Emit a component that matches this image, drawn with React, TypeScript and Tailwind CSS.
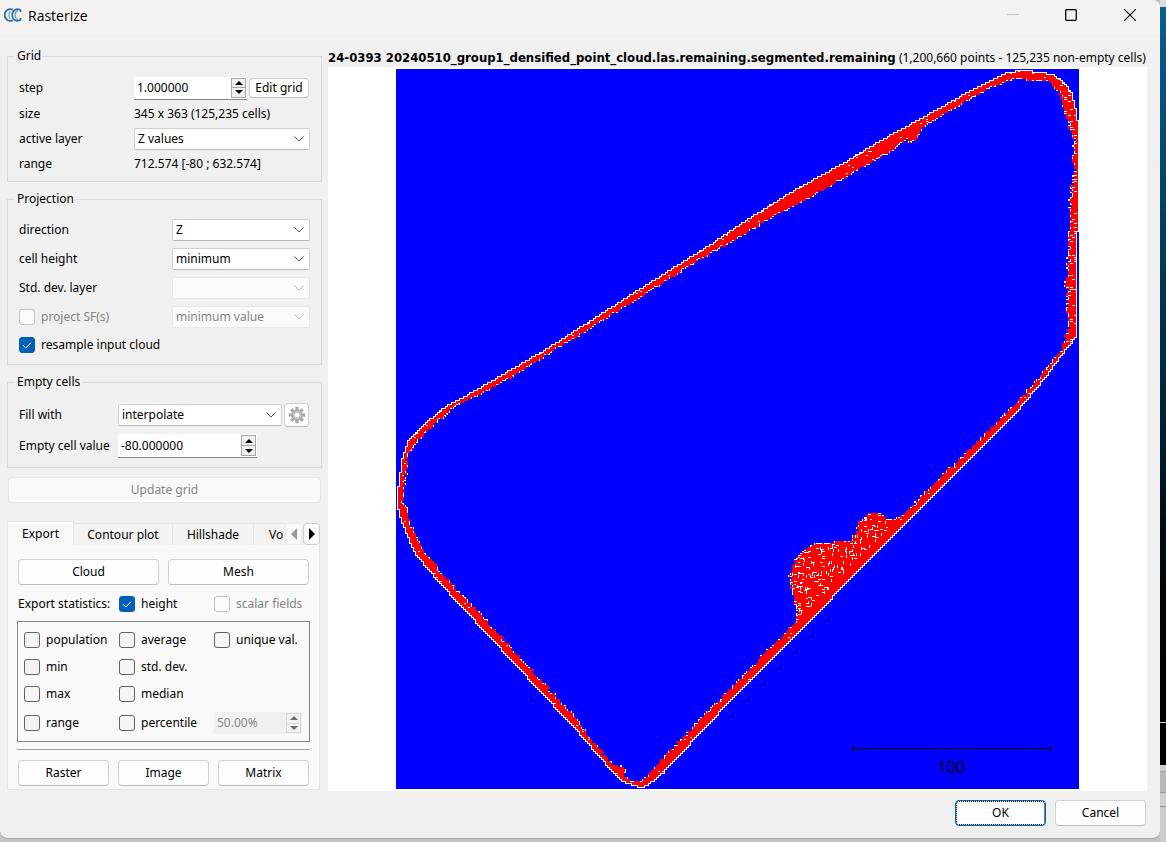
import { useId, useState, type ReactNode } from "react";
import { clsx } from "clsx";

type Point = [number, number];

/* ---------- raster preview ---------- */

const CELL = 2;
const LEFT = 396;
const TOP = 69;
const COLS = 341;
const ROWS = 360;

const OUTER: Point[] = [
  [495, 380], [460, 400], [445, 408], [426, 424], [410, 439], [403, 458], [400, 480], [398, 493],
  [399, 510], [403, 523], [415, 552], [438, 580], [580, 733], [618, 777], [627, 783], [637, 785],
  [640, 787], [647, 785], [663, 772], [718, 713], [790, 640], [810, 620], [877, 550], [940, 489],
  [980, 448], [1015, 413], [1045, 377], [1060, 356], [1076, 336], [1076, 232], [1078, 231],
  [1078, 127], [1075, 110], [1071, 93], [1063, 83], [1053, 75], [1038, 73], [1025, 71], [1007, 73],
  [990, 82], [970, 92], [920, 120], [880, 142], [847, 162], [793, 192], [753, 217], [713, 244],
  [640, 290], [545, 351],
];

const INNER: Point[] = [
  [507, 380], [480, 395], [457, 405], [435, 424], [423, 436], [413, 447], [407, 460], [405, 480],
  [404, 503], [409, 518], [417, 537], [426, 553], [445, 576], [510, 646], [580, 722], [590, 738],
  [610, 761], [619, 769], [622, 766], [626, 769], [624, 775], [632, 781], [640, 782], [650, 772],
  [680, 740], [712, 707], [780, 638], [796, 622], [797, 607], [793, 597], [789, 580], [793, 565],
  [803, 550], [815, 543], [850, 541], [855, 535], [858, 523], [868, 514], [882, 514], [887, 519],
  [898, 518], [913, 505], [933, 484], [975, 444], [1010, 409], [1038, 378], [1055, 357], [1063, 347],
  [1068, 327], [1066, 283], [1068, 260], [1069, 233], [1070, 203], [1074, 170], [1072, 157],
  [1074, 138], [1068, 123], [1062, 100], [1058, 92], [1050, 82], [1030, 82], [1023, 78], [1005, 82],
  [990, 88], [973, 98], [947, 113], [922, 129], [915, 141], [908, 143], [907, 138], [905, 142],
  [893, 150], [853, 173], [807, 199], [773, 217], [740, 237], [690, 266], [640, 298], [560, 347],
];

function noise(a: number, b: number) {
  let h = Math.imul(a + 101, 374761393) ^ Math.imul(b + 57, 668265263);
  h = Math.imul(h ^ (h >>> 13), 1274126177);
  return ((h ^ (h >>> 16)) >>> 0) / 4294967296;
}

function crossings(polygon: Point[], y: number) {
  const xs: number[] = [];
  polygon.forEach(([x1, y1], i) => {
    const [x2, y2] = polygon[(i + 1) % polygon.length];
    if (y1 > y !== y2 > y) xs.push(x1 + ((y - y1) / (y2 - y1)) * (x2 - x1));
  });
  return xs.sort((a, b) => a - b);
}

function fillMask(polygon: Point[], jitter: number) {
  const mask: boolean[][] = [];
  for (let r = 0; r < ROWS; r++) {
    const row: boolean[] = new Array(COLS).fill(false);
    const xs = crossings(polygon, TOP + r * CELL + 1);
    for (let k = 0; k + 1 < xs.length; k += 2) {
      const from = (xs[k] - LEFT) / CELL + (noise(r, k) - 0.5) * jitter;
      const to = (xs[k + 1] - LEFT) / CELL + (noise(r, k + 9) - 0.5) * jitter;
      for (let c = Math.max(0, Math.round(from)); c < Math.min(COLS, Math.round(to)); c++) row[c] = true;
    }
    mask.push(row);
  }
  return mask;
}

function maskPath(mask: boolean[][]) {
  let d = "";
  mask.forEach((row, r) => {
    let c = 0;
    while (c < COLS) {
      if (!row[c]) {
        c++;
        continue;
      }
      const start = c;
      while (c < COLS && row[c]) c++;
      d += `M${LEFT + start * CELL} ${TOP + r * CELL}h${(c - start) * CELL}v${CELL}h${-(c - start) * CELL}z`;
    }
  });
  return d;
}

function specklePath(outer: boolean[][], inner: boolean[][]) {
  let d = "";
  for (let r = 1; r < ROWS - 1; r++) {
    for (let c = 1; c < COLS - 1; c++) {
      const x = LEFT + c * CELL;
      const y = TOP + r * CELL;
      if (!outer[r][c] || inner[r][c]) continue;
      const blob = x > 788 && x < 896 && y > 512 && y < 620;
      const n = noise(r + 400, c + 900);
      const m = noise(c + 31, r + 77);
      if (blob) {
        const nearEdge = !outer[Math.min(ROWS - 1, r + 6)][c];
        if (!nearEdge && n < 0.22) {
          const vertical = x > 822 && x < 862 ? m < 0.8 : m < 0.35;
          const length = m > 0.5 || vertical ? 3 : 2;
          const shift = n < 0.11 ? 1 : 0;
          d += vertical ? `M${x + shift} ${y}h1v${length}h-1z` : `M${x} ${y + shift}h${length}v1h${-length}z`;
        }
      } else if (x > 1058 && n < 0.14) {
        d += `M${x} ${y}h3v1h-3z`;
      } else if (n < 0.03) {
        d += `M${x} ${y}h2v1h-2z`;
      }
      if (inner[r][c + 1] && m < 0.4) d += `M${x + 1} ${y}h1v2h-1z`;
      if (inner[r][c - 1] && m < 0.4) d += `M${x} ${y}h1v2h-1z`;
      if (inner[r + 1][c] && n > 0.6) d += `M${x} ${y + 1}h2v1h-2z`;
      if (inner[r - 1][c] && n > 0.75) d += `M${x} ${y}h2v1h-2z`;
    }
  }
  return d;
}

const outerMask = fillMask(OUTER, 0);
const innerMask = fillMask(INNER, 1.6);
const outerPath = maskPath(outerMask);
const innerPath = maskPath(innerMask);
const speckles = specklePath(outerMask, innerMask);

function RasterView() {
  return (
    <svg viewBox="328 67 819 724" className="block w-full bg-white" role="img" aria-label="Grid preview" shapeRendering="crispEdges">
      <rect x="396" y="69" width="683" height="720" fill="#0000ff" />
      <path d={outerPath} fill="none" stroke="#ffffff" strokeWidth="2" />
      <path d={outerPath} fill="#ff0000" />
      <path d={innerPath} fill="#0000ff" />
      <path d={speckles} fill="#ffffff" />
      <path d="M852 748h199M852.500 745v6M1050.500 745v6" stroke="#000" strokeWidth="1" transform="translate(0 .5)" />
      <text x="951" y="773" textAnchor="middle" fontSize="16" fill="#000" className="font-['Noto_Sans',sans-serif]">
        100
      </text>
    </svg>
  );
}

/* ---------- controls ---------- */

function Check({ label, checked = false, disabled = false }: { label: string; checked?: boolean; disabled?: boolean }) {
  const [on, setOn] = useState(checked);
  return (
    <label className={clsx("flex items-center gap-1.5 whitespace-nowrap", disabled && "text-[#858585]")}>
      <span className="grid size-4 shrink-0">
        <input
          type="checkbox"
          checked={on}
          disabled={disabled}
          onChange={(e) => setOn(e.target.checked)}
          className="col-start-1 row-start-1 size-4 appearance-none rounded-[3px] border border-[#626262] bg-[#f4f4f4] checked:border-[#005fb8] checked:bg-[#005fb8] disabled:border-[#c5c5c5] disabled:bg-[#fafafa]"
        />
        {on && (
          <svg viewBox="0 0 16 16" className="pointer-events-none col-start-1 row-start-1 size-4" fill="none" stroke="#fff">
            <path d="M4 8.200 6.700 11 12 5.700" />
          </svg>
        )}
      </span>
      {label}
    </label>
  );
}

function Select({ id, value, disabled = false, label }: { id?: string; value: string; disabled?: boolean; label?: string }) {
  return (
    <span className="grid h-[22px] min-w-0 flex-1 items-center">
      <select
        id={id}
        aria-label={label}
        disabled={disabled}
        className="col-start-1 row-start-1 h-[22px] w-full appearance-none rounded-[2px] border border-[#d0d0d0] border-b-[#b8b8b8] bg-white pl-[3px] disabled:border-[#e8e8e8] disabled:bg-[#fafafa] disabled:text-[#858585] disabled:opacity-100"
      >
        <option>{value}</option>
      </select>
      <svg
        viewBox="0 0 10 6"
        className={clsx("pointer-events-none col-start-1 row-start-1 mr-1.5 h-1.5 w-2.5 justify-self-end", disabled ? "text-[#bdbdbd]" : "text-[#555]")}
        fill="none"
        stroke="currentColor"
      >
        <path d="M.5.5 5 5 9.500.5" />
      </svg>
    </span>
  );
}

function Spin({ id, label, value, disabled = false, className }: { id?: string; label?: string; value: string; disabled?: boolean; className: string }) {
  const button = clsx(
    "grid flex-1 place-items-center border",
    disabled ? "border-[#d8d8d8] bg-[#f0f0f0] text-[#6b6b6b]" : "border-[#a8a8a8] bg-[#f0f0f0] text-black",
  );
  return (
    <span className={clsx("flex", disabled ? "rounded-[2px] bg-[#f0f0f0]" : "border-b border-[#868686] bg-white", className)}>
      <input
        id={id}
        aria-label={label}
        defaultValue={value}
        disabled={disabled}
        className="w-0 min-w-0 flex-1 bg-transparent pl-[3px] disabled:text-[#858585]"
      />
      <span className="my-px mr-px flex w-[15px] flex-col">
        <button type="button" aria-label="Increase" disabled={disabled} className={button}>
          <svg viewBox="0 0 8 4" className="h-1 w-2" fill="currentColor"><path d="M4 0 8 4H0z" /></svg>
        </button>
        <button type="button" aria-label="Decrease" disabled={disabled} className={clsx(button, "border-t-0")}>
          <svg viewBox="0 0 8 4" className="h-1 w-2" fill="currentColor"><path d="M0 0h8L4 4z" /></svg>
        </button>
      </span>
    </span>
  );
}

function Button({ children, className, disabled = false, primary = false, label }: { children: ReactNode; className?: string; disabled?: boolean; primary?: boolean; label?: string }) {
  return (
    <button
      type="button"
      disabled={disabled}
      aria-label={label}
      className={clsx(
        "flex items-center justify-center rounded-[4px] border",
        disabled && "border-[#e5e5e5] bg-[#f9f9f9] text-[#858585]",
        primary && "border-[#0067c0] bg-[#fdfdfd] outline-1 -outline-offset-2 outline-dotted outline-black",
        !disabled && !primary && "border-[#d0d0d0] border-b-[#bcbcbc] bg-[#fdfdfd]",
        className,
      )}
    >
      {children}
    </button>
  );
}

function Group({ title, children }: { title: string; children: ReactNode }) {
  return (
    <fieldset className="min-w-0 border border-[#dadada]">
      <legend className="ml-[7px] h-[18px] px-0.5 leading-[18px]">{title}</legend>
      {children}
    </fieldset>
  );
}

function Gear() {
  return (
    <svg viewBox="0 0 18 18" className="size-[18px] shrink-0">
      <g fill="#a9a9a9">
        {[0, 45, 90, 135, 180, 225, 270, 315].map((a) => (
          <path key={a} d="M7.300.8h3.400L10.300 5H7.700z" transform={`rotate(${a} 9 9)`} />
        ))}
        <circle cx="9" cy="9" r="5.800" />
      </g>
      <circle cx="9" cy="9" r="3.900" fill="none" stroke="#c9c9c9" strokeWidth="1" />
      <circle cx="9" cy="9" r="2.600" fill="#fdfdfd" />
    </svg>
  );
}

/* ---------- panels ---------- */

function GridGroup() {
  const step = useId();
  const layer = useId();
  return (
    <Group title="Grid">
      <div className="grid grid-cols-[115px_1fr] items-center gap-y-[5px] pt-[11px] pr-[11px] pb-2 pl-[11px]">
        <label htmlFor={step}>step</label>
        <div className="flex h-6 items-center gap-0.5 pr-px">
          <Spin id={step} value="1.000000" className="h-[23px] flex-1" />
          <Button className="h-5 w-[60px]">Edit grid</Button>
        </div>
        <span>size</span>
        <span>345 x 363 (125,235 cells)</span>
        <label htmlFor={layer}>active layer</label>
        <Select id={layer} value="Z values" />
        <span>range</span>
        <span>712.574 [-80 ; 632.574]</span>
      </div>
    </Group>
  );
}

function ProjectionGroup() {
  const direction = useId();
  const height = useId();
  const deviation = useId();
  return (
    <Group title="Projection">
      <div className="grid grid-cols-[153px_1fr] items-center gap-y-[7px] pt-[11px] pr-[11px] pb-[9px] pl-[11px]">
        <label htmlFor={direction}>direction</label>
        <Select id={direction} value="Z" />
        <label htmlFor={height}>cell height</label>
        <Select id={height} value="minimum" />
        <label htmlFor={deviation}>Std. dev. layer</label>
        <Select id={deviation} value="" disabled />
        <Check label="project SF(s)" disabled />
        <Select label="Scalar field projection" value="minimum value" disabled />
        <div className="col-span-2 flex h-5 items-center">
          <Check label="resample input cloud" checked />
        </div>
      </div>
    </Group>
  );
}

function EmptyCellsGroup() {
  const fill = useId();
  const value = useId();
  return (
    <Group title="Empty cells">
      <div className="grid grid-cols-[99px_1fr] items-center gap-y-[7px] pt-3 pr-[11px] pb-[9px] pl-[11px]">
        <label htmlFor={fill}>Fill with</label>
        <div className="flex items-center gap-0.5 pr-px">
          <Select id={fill} value="interpolate" />
          <Button label="Interpolation settings" className="h-6 w-[25px]">
            <Gear />
          </Button>
        </div>
        <label htmlFor={value}>Empty cell value</label>
        <Spin id={value} value="-80.000000" className="h-6 w-[139px]" />
      </div>
    </Group>
  );
}

function ExportTabs() {
  const tab = "h-[22px] shrink-0 border-t border-r border-[#e5e5e5] bg-[#f3f3f3]";
  return (
    <div className="mr-0.5">
      <div role="tablist" className="flex h-6 items-end">
        <button type="button" role="tab" aria-selected="true" className="h-6 w-[67px] shrink-0 border-x border-t border-[#e5e5e5] bg-[#f9f9f9]">
          Export
        </button>
        <button type="button" role="tab" aria-selected="false" className={clsx(tab, "w-[99px]")}>Contour plot</button>
        <button type="button" role="tab" aria-selected="false" className={clsx(tab, "w-[81px]")}>Hillshade</button>
        <button type="button" role="tab" aria-selected="false" className="h-[22px] w-[31px] shrink-0 overflow-hidden border-t border-[#e5e5e5] bg-[#f3f3f3] pl-[15px] text-left">
          Vo
        </button>
        <button type="button" aria-label="Previous tabs" disabled className="grid h-[22px] w-[17px] shrink-0 place-items-center rounded-[4px] border border-[#ececec] bg-[#f9f9f9]">
          <svg viewBox="0 0 6 12" className="h-3 w-1.5" fill="#999"><path d="M6 0v12L0 6z" /></svg>
        </button>
        <button type="button" aria-label="Next tabs" className="ml-px grid h-[22px] w-[17px] shrink-0 place-items-center rounded-[4px] border border-[#cfcfcf] bg-[#fdfdfd]">
          <svg viewBox="0 0 6 12" className="h-3 w-1.5" fill="#000"><path d="M0 0v12l6-6z" /></svg>
        </button>
      </div>
      <div role="tabpanel" className="flex flex-col border-x border-b border-[#e5e5e5] bg-[#f9f9f9] px-[9px] pt-3.5 pb-[3px]">
        <div className="grid grid-cols-2 gap-[9px] px-px">
          <Button className="h-[26px]">Cloud</Button>
          <Button className="h-[26px]">Mesh</Button>
        </div>
        <div className="mt-2.5 grid h-[18px] grid-cols-[101px_95px_1fr] items-center pl-px">
          <span>Export statistics:</span>
          <Check label="height" checked />
          <Check label="scalar fields" disabled />
        </div>
        <div className="mt-2 grid grid-cols-[95px_95px_1fr] items-center gap-y-[9px] border border-[#828790] pt-[9px] pb-[7px] pl-1.5">
          <Check label="population" />
          <Check label="average" />
          <Check label="unique val." />
          <Check label="min" />
          <Check label="std. dev." />
          <span />
          <Check label="max" />
          <Check label="median" />
          <span />
          <Check label="range" />
          <Check label="percentile" />
          <Spin label="Percentile value" value="50.00%" disabled className="h-[22px] w-[88px]" />
        </div>
        <hr className="mt-[7px] border-[#a0a0a0]" />
        <div className="mt-2.5 grid grid-cols-3 gap-[9px] px-px">
          <Button className="h-[26px]">Raster</Button>
          <Button className="h-[26px]">Image</Button>
          <Button className="h-[26px]">Matrix</Button>
        </div>
      </div>
    </div>
  );
}

function TitleBar() {
  return (
    <header className="flex h-[34px] items-start bg-[#f4f2f0] pl-1 font-['Open_Sans',sans-serif] text-[14px]">
      <svg viewBox="0 0 18 16" className="mt-[7px] h-4 w-[18px]" fill="none">
        <path d="M8.800 2.600A5.900 5.900 0 1 0 8.800 13.400" stroke="#2a6fa3" strokeWidth="1.800" />
        <path d="M6.200 4.200C4.600 5.600 4.600 10.400 6.200 11.800" stroke="#5ba4cf" strokeWidth="1.200" />
        <path d="M16.500 5V2.900C12 .8 8.200 3.600 8.200 8s3.800 7.200 8.300 5.100V11" stroke="#2a6fa3" strokeWidth="1.700" />
        <path d="M13.800 3.400C10.400 4.600 10.400 11.400 13.800 12.600" stroke="#5ba4cf" strokeWidth="1.200" />
      </svg>
      <h1 className="mt-[7px] ml-1.5 flex-1">Rasterize</h1>
      <div className="flex">
        <button type="button" aria-label="Minimize" disabled className="grid h-[30px] w-[58px] place-items-center">
          <svg viewBox="0 0 12 12" className="size-3" stroke="#c4c4c4"><path d="M0 5.500h12" /></svg>
        </button>
        <button type="button" aria-label="Maximize" className="grid h-[30px] w-[58px] place-items-center">
          <svg viewBox="0 0 12 12" className="size-3" fill="none" stroke="#000" strokeWidth="1.300"><rect x=".7" y=".7" width="10.600" height="10.600" rx="1" /></svg>
        </button>
        <button type="button" aria-label="Close" className="grid h-[30px] w-[60px] place-items-center">
          <svg viewBox="0 0 12 12" className="size-3" stroke="#000" strokeWidth="1.200"><path d="m.3.3 11.400 11.400M11.700.3.3 11.700" /></svg>
        </button>
      </div>
    </header>
  );
}

export default function App() {
  return (
    <div className="flex min-h-screen bg-[#c4c4c4] font-['Noto_Sans','Liberation_Sans',sans-serif] text-[12px] leading-[18px] text-black">
      <div className="flex min-w-0 flex-1 pb-[3px]">
        <main className="flex min-w-0 flex-1 flex-col overflow-hidden rounded-tr-lg rounded-b-lg border-b border-[#a5a5a5] bg-[#f0f0f0]">
          <TitleBar />
          <div className="flex flex-1 items-start gap-1.5 pr-[13px] pl-[7px]">
            <div className="mt-[13px] flex w-[315px] shrink-0 flex-col gap-2">
              <GridGroup />
              <ProjectionGroup />
              <EmptyCellsGroup />
              <Button disabled className="mx-px mt-px mb-2.5 h-[26px]">Update grid</Button>
              <ExportTabs />
            </div>
            <section className="mt-[15px] min-w-0 flex-1">
              <p className="h-[18px] whitespace-nowrap">
                <b className="font-['DejaVu_Sans_Condensed','Noto_Sans',sans-serif] text-[13px]">
                  24-0393 20240510_group1_densified_point_cloud.las.remaining.segmented.remaining
                </b>{" "}
                (1,200,660 points - 125,235 non-empty cells)
              </p>
              <RasterView />
            </section>
          </div>
          <footer className="flex justify-end gap-[9px] pr-3.5 pb-3">
            <Button primary className="h-[26px] w-[91px]">OK</Button>
            <Button className="h-[26px] w-[91px]">Cancel</Button>
          </footer>
        </main>
      </div>
      <div aria-hidden="true" className="flex w-1.5 shrink-0 flex-col">
        <div className="h-[7px] bg-[#dcdcdc]" />
        <div className="flex-1 bg-linear-to-b from-[#0b5f8c] via-[#032a3f] to-black" />
        <div className="h-px bg-[#d0d0d0]" />
        <div className="h-[42px] bg-black" />
        <div className="h-[6px] bg-[#d0d0d0]" />
        <div className="h-[22px] border-y border-[#999] bg-[#b8b8b8]" />
        <div className="h-[14px] border-b border-[#8b8b9b] bg-[#d0d0d0]" />
        <div className="h-[35px] bg-[#cccccc]" />
      </div>
    </div>
  );
}
